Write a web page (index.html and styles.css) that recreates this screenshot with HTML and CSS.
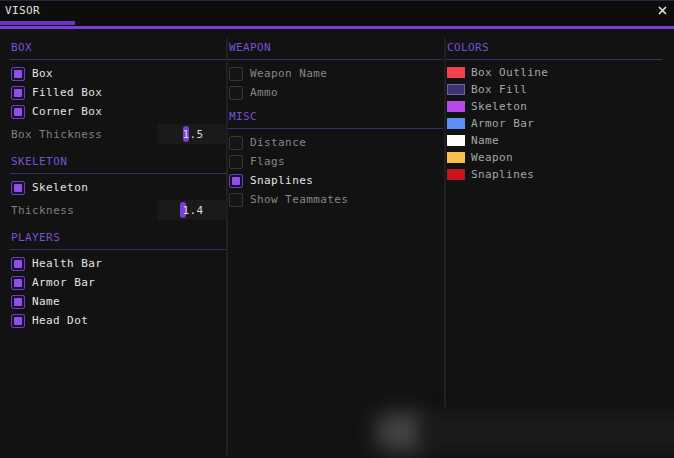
FILE: index.html
```html
<!DOCTYPE html>
<html lang="en">
<head>
    <meta charset="utf-8" />
    <title>VISOR</title>
    <link rel="stylesheet" href="styles.css">
</head>
<body>
    <div id="window">
        <div id="titlebar">
            <span class="title">VISOR</span>
            <svg class="close" width="9" height="9" viewBox="0 0 9 9">
                <path d="M1 1 L8 8 M8 1 L1 8" stroke="#e4e4e4" stroke-width="1.6" />
            </svg>
        </div>
        <div id="tabbar">
            <div class="tab"></div>
        </div>

        <div id="columns">
            <div class="column col1">
                <div class="header">BOX</div>
                <div class="list">
                    <div class="row"><span class="check on"></span>Box</div>
                    <div class="row"><span class="check on"></span>Filled Box</div>
                    <div class="row"><span class="check on"></span>Corner Box</div>
                </div>
                <div class="slider-row">
                    <span class="label dim">Box Thickness</span>
                    <div class="slider"><span class="grab" style="left:26px"></span><span class="value">1.5</span></div>
                </div>

                <div class="header section">SKELETON</div>
                <div class="list">
                    <div class="row"><span class="check on"></span>Skeleton</div>
                </div>
                <div class="slider-row">
                    <span class="label dim">Thickness</span>
                    <div class="slider"><span class="grab" style="left:23px"></span><span class="value">1.4</span></div>
                </div>

                <div class="header section">PLAYERS</div>
                <div class="list">
                    <div class="row"><span class="check on"></span>Health Bar</div>
                    <div class="row"><span class="check on"></span>Armor Bar</div>
                    <div class="row"><span class="check on"></span>Name</div>
                    <div class="row"><span class="check on"></span>Head Dot</div>
                </div>
            </div>

            <div class="column col2">
                <div class="header">WEAPON</div>
                <div class="list">
                    <div class="row off"><span class="check"></span>Weapon Name</div>
                    <div class="row off"><span class="check"></span>Ammo</div>
                </div>

                <div class="header misc">MISC</div>
                <div class="list">
                    <div class="row off"><span class="check"></span>Distance</div>
                    <div class="row off"><span class="check"></span>Flags</div>
                    <div class="row"><span class="check on"></span>Snaplines</div>
                    <div class="row off"><span class="check"></span>Show Teammates</div>
                </div>
            </div>

            <div class="column col3">
                <div class="header">COLORS</div>
                <div class="list">
                    <div class="color-row"><span class="swatch" style="background:#f2404c"></span>Box Outline</div>
                    <div class="color-row"><span class="swatch" style="background:#3b3470;border-color:#6b62b4"></span>Box Fill</div>
                    <div class="color-row"><span class="swatch" style="background:#b44ae8"></span>Skeleton</div>
                    <div class="color-row"><span class="swatch" style="background:#5b8ef6"></span>Armor Bar</div>
                    <div class="color-row"><span class="swatch" style="background:#ffffff"></span>Name</div>
                    <div class="color-row"><span class="swatch" style="background:#f7c04e"></span>Weapon</div>
                    <div class="color-row"><span class="swatch" style="background:#d4101c;border-color:#9a2040"></span>Snaplines</div>
                </div>
            </div>
        </div>

        <div class="glare"></div>
        <div class="glare-band"></div>
    </div>
</body>
</html>
```

FILE: styles.css
```css
body {
    margin: 0;
    background: #111111;
}
#window {
    position: relative;
    width: 674px;
    height: 458px;
    overflow: hidden;
    background: #121212;
    color: #e6e6e6;
    font-family: "DejaVu Sans Mono", "Liberation Mono", monospace;
    font-size: 11px;
    letter-spacing: 0.4px;
}
#titlebar {
    height: 20px;
    border-top: 1px solid #2c2342;
    background: #0d0d0d;
    display: flex;
    align-items: center;
    justify-content: space-between;
    padding: 0 7px 0 5px;
    box-sizing: border-box;
}
.title {
    color: #e2e2e2;
    line-height: 14px;
}
.close {
    display: block;
}
#tabbar {
    height: 5px;
    padding-top: 1px;
    background: #0d0d0d;
    border-bottom: 3px solid #7a3fd6;
    box-sizing: content-box;
}
.tab {
    width: 75px;
    height: 4px;
    background: #6a34c4;
}

#columns {
    display: flex;
    align-items: flex-start;
    padding-top: 9px;
}
.column {
    box-sizing: border-box;
    padding-top: 3px;
    border-right: 2px solid #202020;
}
.col1 {
    width: 228px;
    height: 417px;
    padding-left: 10px;
}
.col2 {
    width: 218px;
    height: 370px;
}
.col3 {
    width: 228px;
    border-right: none;
}

.header {
    height: 14px;
    line-height: 14px;
    padding: 0 0 4px 1px;
    border-bottom: 1px solid #3a2d6c;
    color: #7850d4;
}
.col2 .header {
    margin-right: 1px;
}
.col3 .header {
    margin-right: 12px;
}
.header.section {
    margin-top: 11px;
}
.header.misc {
    margin-top: 8px;
}
.list {
    padding-top: 4px;
}

.row {
    height: 19px;
    display: flex;
    align-items: center;
    padding-left: 1px;
    color: #e4e4e4;
}
.row.off {
    color: #868686;
}
.check {
    width: 12px;
    height: 12px;
    border: 1px solid #363636;
    border-radius: 2px;
    background: #151515;
    margin-right: 7px;
    display: flex;
    align-items: center;
    justify-content: center;
}
.check.on {
    border-color: #6b3cc6;
    background: #1a1325;
}
.check.on::after {
    content: "";
    width: 8px;
    height: 8px;
    border-radius: 1px;
    background: #8f4fe8;
}

.slider-row {
    height: 20px;
    margin-top: 3px;
    margin-right: -1px;
    display: flex;
    align-items: center;
    justify-content: space-between;
}
.label.dim {
    color: #808080;
    padding-left: 1px;
}
.slider {
    position: relative;
    width: 70px;
    height: 20px;
    border-radius: 3px;
    background: #1a1a1a;
    display: flex;
    align-items: center;
    justify-content: center;
}
.grab {
    position: absolute;
    top: 2px;
    width: 6px;
    height: 16px;
    border-radius: 3px;
    background: #7a3ed8;
}
.value {
    position: relative;
    color: #dcdcdc;
    padding-left: 2px;
}

.color-row {
    height: 17px;
    display: flex;
    align-items: center;
    padding-left: 1px;
    color: #a6a6a6;
}
.swatch {
    width: 16px;
    height: 9px;
    border: 1px solid transparent;
    margin-right: 6px;
}

/* soft reflection at the bottom edge */
.glare {
    position: absolute;
    left: 374px;
    top: 412px;
    width: 56px;
    height: 40px;
    border-radius: 20px;
    background: #424242;
    filter: blur(10px);
}
.glare-band {
    position: absolute;
    left: 420px;
    top: 414px;
    width: 270px;
    height: 36px;
    background: #1b1b1b;
    filter: blur(8px);
}
```
